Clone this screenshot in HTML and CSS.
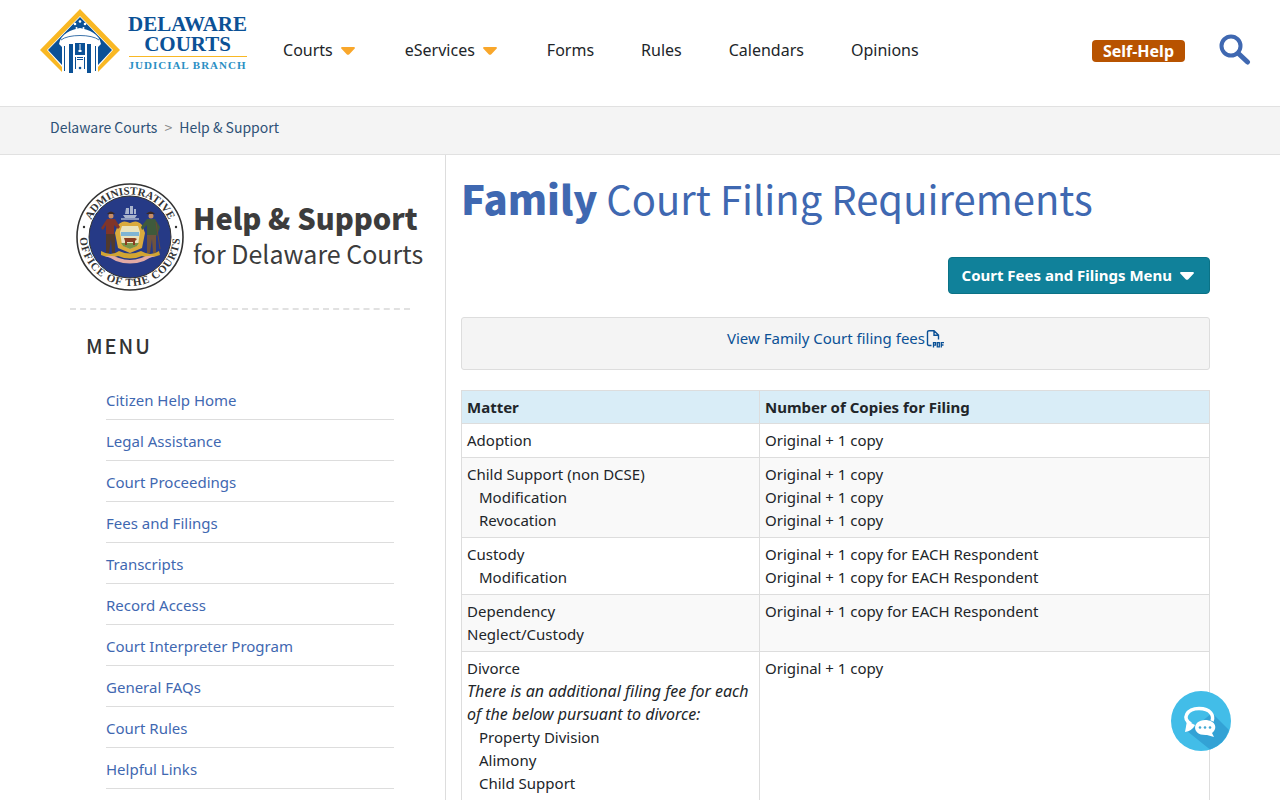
FILE: index.html
```html
<!DOCTYPE html>
<html lang="en">
<head>
    <meta charset="UTF-8">
    <meta name="viewport" content="width=device-width, initial-scale=1.0">
    <title>Family Court Filing Requirements - Delaware Courts</title>
    <link rel="stylesheet" href="styles.css">
</head>
<body>
    <header class="site-header">
        <a href="#" class="logo">
            <svg class="logo-mark" viewBox="0 0 82 66" width="82" height="66" aria-hidden="true">
                <path d="M41 0 81 41 59 63V58L74 41 41 7 8 41 23 58V63L1 41z" fill="#f9b824"/>
                <path d="M41 8 73 41 59 56V32H23V56L9 41z" fill="#0b5196"/>
                <path d="M20 35C22 24 32 21 41 19C50 21 60 24 62 35L59 38H23z" fill="#fff"/>
                <path d="M22 31C29 25 53 25 60 31" fill="none" stroke="#0b5196" stroke-width=".8"/>
                <path d="M23 37H59V62L41 65 23 62z" fill="#fff"/>
                <path d="M25 37h1v25h-1zM30 35h4v29h-4zM48 35h4v29h-4zM56 37h1v25h-1zM36 34h10v12H36zM36 48h1v12h-1zM45 48h1v12h-1zM38 48h6v1h-6zM38 50h6v1h-6z" fill="#0b5196"/>
                <path d="M40.500 35h1v6h-1zM39.500 41h3v2h-3z" fill="#fff"/>
                <circle cx="41" cy="59" r="1.300" fill="#0b5196"/>
                <g fill="#fff">
                    <circle cx="41" cy="12.500" r="1.300"/><circle cx="36" cy="15" r="1.300"/><circle cx="46" cy="15" r="1.300"/>
                    <circle cx="37.500" cy="19" r="1"/><circle cx="44.500" cy="19" r="1"/>
                </g>
            </svg>
            <span class="logo-text">
                <span class="logo-name">DELAWARE</span>
                <span class="logo-name">COURTS</span>
                <span class="logo-branch">JUDICIAL BRANCH</span>
            </span>
        </a>
        <nav class="main-nav">
            <a href="#">Courts <svg class="caret" viewBox="0 0 14 8" width="14" height="8"><path d="M1 0h12q1.500 .5 .5 1.800L8.300 7.200Q7 8.400 5.700 7.200L.5 1.800Q-.5 .5 1 0z" fill="currentColor"/></svg></a>
            <a href="#">eServices <svg class="caret" viewBox="0 0 14 8" width="14" height="8"><path d="M1 0h12q1.500 .5 .5 1.800L8.300 7.200Q7 8.400 5.700 7.200L.5 1.800Q-.5 .5 1 0z" fill="currentColor"/></svg></a>
            <a href="#">Forms</a>
            <a href="#">Rules</a>
            <a href="#">Calendars</a>
            <a href="#">Opinions</a>
        </nav>
        <a href="#" class="self-help">Self-Help</a>
        <button type="button" class="search-btn" aria-label="Search">
            <svg viewBox="0 0 32 32" width="32" height="32">
                <circle cx="12" cy="12" r="9.500" fill="none" stroke="#3f68b1" stroke-width="4"/>
                <path d="M20 20 28.500 28" stroke="#3f68b1" stroke-width="5" stroke-linecap="round"/>
            </svg>
        </button>
    </header>

    <div class="breadcrumb">
        <a href="#">Delaware Courts</a>
        <span>&gt;</span>
        <a href="#">Help &amp; Support</a>
    </div>

    <div class="page">
        <aside class="sidebar">
            <a href="#" class="section-brand">
                <svg viewBox="0 0 108 108" width="108" height="108" aria-hidden="true">
                    <defs>
                        <path id="sealTop" d="M11.500 54a42.500 42.500 0 0 1 85 0"/>
                        <path id="sealBottom" d="M4 53a50 50 0 0 0 100 0"/>
                    </defs>
                    <circle cx="54" cy="54" r="53" fill="#fff" stroke="#333" stroke-width="1.600"/>
                    <circle cx="54" cy="54" r="41" fill="#263a86" stroke="#333"/>
                    <g class="seal-text">
                        <text text-anchor="middle"><textPath href="#sealTop" startOffset="50%">ADMINISTRATIVE</textPath></text>
                        <text class="seal-bottom" text-anchor="middle"><textPath href="#sealBottom" startOffset="50%">OFFICE OF THE COURTS</textPath></text>
                    </g>
                    <circle cx="8" cy="44" r="1.200" fill="#333"/>
                    <circle cx="100" cy="44" r="1.200" fill="#333"/>
                    <!-- ship crest -->
                    <path d="M47 32h14l-2 3H49zM50 25h3v6h-4zM54 23h3v8h-3zM58 26h2v5h-2z" fill="#a9b4cd"/>
                    <path d="M45 36h18" stroke="#a9b4cd" stroke-width="1.500"/>
                    <!-- shield -->
                    <path d="M42 42q5-6 12-2 7-4 12 2l3 8-3 15-12 5-12-5-3-15z" fill="#d9aa3d"/>
                    <path d="M46 43h16l2 6-2 13-8 4-8-4-2-13z" fill="#e9e3be"/>
                    <path d="M45 49h18v4H45z" fill="#7fb5d5"/>
                    <path d="M45 60h18l-2 3-7 3-7-3z" fill="#789348"/>
                    <path d="M48 55h11l2 1-2 2v4h-2v-3h-6v3h-2v-4z" fill="#8a3d21"/>
                    <!-- supporters -->
                    <circle cx="35" cy="33" r="2.500" fill="#c78d66"/>
                    <path d="M31 31q4-5 8 0z" fill="#3d2a24"/>
                    <path d="M31 36h8l5 8-2 2-4-4v10h-8V42l-3 5-2-2z" fill="#80352a"/>
                    <path d="M30 51h9v19h-3l-1-14-2 14h-3z" fill="#513a2d"/>
                    <circle cx="75" cy="33" r="2.500" fill="#c78d66"/>
                    <path d="M70 31q5-5 9 0z" fill="#3d2a24"/>
                    <path d="M71 36h8l5 8-3 9-2-1 1-7-1 8h-8V42l-5 5-1-3z" fill="#3f5a3c"/>
                    <path d="M71 52h9v18h-3l-1-14-2 14h-3z" fill="#70533e"/>
                    <path d="M80 39 84 66" stroke="#6d4a34"/>
                    <!-- scroll -->
                    <path d="M25 68q10 6 18 0 11 5 22 0 10 6 18 0l1 4q-10 4-18 1-12 5-24 0-8 3-17-1z" fill="#d2a532"/>
                    <path d="M29 73q8-1 14 2 11 4 22 0 6-3 14-2-7 2-11 5-14 5-28 0-4-3-11-5z" fill="#e2aaa4"/>
                </svg>
                <span class="section-title"><strong>Help &amp; Support</strong>for Delaware Courts</span>
            </a>
            <h2>MENU</h2>
            <ul class="side-menu">
                <li><a href="#">Citizen Help Home</a></li>
                <li><a href="#">Legal Assistance</a></li>
                <li><a href="#">Court Proceedings</a></li>
                <li><a href="#">Fees and Filings</a></li>
                <li><a href="#">Transcripts</a></li>
                <li><a href="#">Record Access</a></li>
                <li><a href="#">Court Interpreter Program</a></li>
                <li><a href="#">General FAQs</a></li>
                <li><a href="#">Court Rules</a></li>
                <li><a href="#">Helpful Links</a></li>
            </ul>
        </aside>

        <main class="content">
            <h1><strong>Family</strong> Court Filing Requirements</h1>
            <div class="actions">
                <button type="button" class="menu-btn">Court Fees and Filings Menu
                    <svg viewBox="0 0 14 8" width="14" height="8"><path d="M1 0h12q1.500 .5 .5 1.800L8.300 7.200Q7 8.400 5.700 7.200L.5 1.800Q-.5 .5 1 0z" fill="currentColor"/></svg>
                </button>
            </div>
            <div class="well">
                <a href="#">View Family Court filing fees<svg class="pdf-icon" viewBox="0 0 18 18" width="18" height="18" role="img" aria-label="PDF">
                    <path d="M5.500 15.500H3Q1.500 15.500 1.500 14V2Q1.500 .7 3 .7H8L12.500 5V9.500M8 1V5.200H12.500" fill="none" stroke="currentColor" stroke-width="1.400"/>
                    <path d="M7.500 17.500V12.700H9.500V15.200H7.500M11.300 12.700V16.800H13.300V12.700zM15.300 17.500V12.700H18M15.300 15H17.500" fill="none" stroke="currentColor" stroke-width="1.300"/>
                </svg></a>
            </div>
            <table class="filing-table">
                <thead>
                    <tr>
                        <th scope="col">Matter</th>
                        <th scope="col">Number of Copies for Filing</th>
                    </tr>
                </thead>
                <tbody>
                    <tr>
                        <td>Adoption</td>
                        <td>Original + 1 copy</td>
                    </tr>
                    <tr>
                        <td>Child Support (non DCSE)
                            <div class="sub">Modification</div>
                            <div class="sub">Revocation</div>
                        </td>
                        <td>Original + 1 copy<br>Original + 1 copy<br>Original + 1 copy</td>
                    </tr>
                    <tr>
                        <td>Custody
                            <div class="sub">Modification</div>
                        </td>
                        <td>Original + 1 copy for EACH Respondent<br>Original + 1 copy for EACH Respondent</td>
                    </tr>
                    <tr>
                        <td>Dependency<br>Neglect/Custody</td>
                        <td>Original + 1 copy for EACH Respondent</td>
                    </tr>
                    <tr>
                        <td>Divorce<br>
                            <em>There is an additional filing fee for each<br>of the below pursuant to divorce:</em>
                            <div class="sub">Property Division</div>
                            <div class="sub">Alimony</div>
                            <div class="sub">Child Support</div>
                            <div class="sub">Custody</div>
                        </td>
                        <td>Original + 1 copy</td>
                    </tr>
                </tbody>
            </table>
        </main>
    </div>

    <button type="button" class="chat-btn" aria-label="Chat">
        <svg viewBox="0 0 60 60" width="60" height="60">
            <circle cx="30" cy="30" r="30" fill="#42bde8"/>
            <path d="M41 22 58 39A30 30 0 0 1 39 58.500L16 40 24 36z" fill="#33a2d5"/>
            <path d="M20 33C10 28 16 17.500 28 17.500S43 25 41 30" fill="none" stroke="#fff" stroke-width="3.500"/>
            <path d="M16 30 14 41Q21 40 24 34z" fill="#fff"/>
            <path d="M34 29C45 29 47 38 41 42L43 46 36 44C20 45 21 29 34 29z" fill="#fff"/>
            <g fill="#42a9d4"><circle cx="29" cy="36.500" r="1.300"/><circle cx="34" cy="36.500" r="1.300"/><circle cx="39" cy="36.500" r="1.300"/></g>
        </svg>
    </button>
</body>
</html>
```
FILE: styles.css
```css
* {
    box-sizing: border-box;
}
body {
    margin: 0;
    height: 100vh;
    overflow: hidden;
    display: flex;
    flex-direction: column;
    font-family: "Noto Sans", sans-serif;
    font-size: 15px;
    line-height: 23px;
    color: #212529;
    background: #fff;
}
a {
    color: #3f68b1;
    text-decoration: none;
}
button {
    border: none;
    padding: 0;
    background: none;
    font: inherit;
    cursor: pointer;
}
svg {
    display: block;
}

/* Header */
.site-header {
    flex: none;
    display: flex;
    align-items: flex-start;
    height: 106px;
    padding: 0 29px 0 39px;
}
.logo {
    display: flex;
    gap: 7px;
    padding-top: 9px;
}
.logo-text {
    display: flex;
    flex-direction: column;
    align-items: center;
    padding-top: 5px;
    font-family: "Liberation Serif", serif;
    font-weight: bold;
    color: #0b5196;
}
.logo-name {
    font-size: 21px;
    line-height: 20px;
}
.logo-branch {
    margin-top: 2px;
    border-top: 1px solid #f9b824;
    font-size: 11px;
    line-height: 16px;
    letter-spacing: 1px;
    color: #2a8fc4;
}
.main-nav {
    display: flex;
    gap: 47px;
    padding: 39px 0 0 36px;
    font-size: 16px;
}
.main-nav a {
    display: flex;
    align-items: center;
    gap: 8px;
    color: #212529;
}
.main-nav .caret {
    margin-right: 3px;
    color: #f9a72b;
}
.self-help {
    margin: 40px 34px 0 auto;
    padding: 0 11px;
    border-radius: 4px;
    background: #b85300;
    color: #fff;
    font-size: 16px;
    line-height: 22px;
    font-weight: bold;
}
.search-btn {
    margin-top: 34px;
}

/* Breadcrumb */
.breadcrumb {
    flex: none;
    display: flex;
    gap: 7px;
    height: 49px;
    padding: 9px 50px;
    border: 1px solid #e1e1e1;
    border-width: 1px 0;
    background: #f4f4f4;
    font-family: "Noto Sans CJK SC", sans-serif;
    font-size: 14px;
    color: #888;
}
.breadcrumb a {
    color: #2e5277;
}

.page {
    flex: 1;
    min-height: 0;
    display: grid;
    grid-template-columns: 445px 1fr;
}

/* Sidebar */
.sidebar {
    padding: 28px 15px 0 70px;
}
.section-brand {
    display: flex;
    align-items: center;
    gap: 9px;
    margin-right: 20px;
    padding: 0 0 17px 6px;
    border-bottom: 2px dashed #e1e1e1;
    color: #3c3c3c;
}
.section-brand svg {
    flex: none;
}
.seal-text {
    font-family: "Liberation Serif", serif;
    font-size: 11px;
    font-weight: bold;
    fill: #333;
}
.seal-bottom {
    letter-spacing: 1px;
}
.section-title {
    padding-bottom: 4px;
    font-family: "Noto Sans CJK SC", sans-serif;
    font-size: 25px;
    line-height: 36px;
    white-space: nowrap;
}
.section-title strong {
    display: block;
    font-size: 29px;
    font-weight: 900;
}
.sidebar h2 {
    margin: 22px 0 19px 16px;
    font-family: "Noto Sans CJK SC", sans-serif;
    font-size: 20px;
    font-weight: 500;
    line-height: 28px;
    letter-spacing: 2px;
    color: #333;
}
.side-menu {
    margin: 0 36px;
    padding: 0;
    list-style: none;
}
.side-menu li {
    padding: 10px 0 7px;
    border-bottom: 1px solid #ddd;
}

/* Content */
.content {
    padding: 14px 70px 0 15px;
    border-left: 1px solid #ddd;
}
.content h1 {
    margin: 0;
    font-family: "Noto Sans CJK SC", sans-serif;
    font-size: 40px;
    font-weight: 400;
    line-height: 58px;
    color: #3f68b1;
}
.content h1 strong {
    font-weight: 900;
}
.actions {
    display: flex;
    justify-content: flex-end;
    margin: 30px 0 23px;
}
.menu-btn {
    display: flex;
    align-items: center;
    gap: 8px;
    padding: 6px 15px 6px 13px;
    border: 1px solid #0b7286;
    border-radius: 4px;
    background: #10819a;
    color: #fff;
    font-weight: bold;
}
.well {
    height: 53px;
    margin-bottom: 20px;
    padding-top: 9px;
    border: 1px solid #ddd;
    border-radius: 3px;
    background: #f4f4f4;
    text-align: center;
}
.well a {
    color: #0b5196;
}
.pdf-icon {
    display: inline-block;
    margin-left: 1px;
    vertical-align: -4px;
}
.filing-table {
    width: 100%;
    border-collapse: collapse;
}
.filing-table th,
.filing-table td {
    padding: 5px;
    border: 1px solid #ddd;
    text-align: left;
    vertical-align: top;
}
.filing-table th {
    padding-bottom: 4px;
    background: #d9edf7;
}
.filing-table th:first-child {
    width: 298px;
}
.filing-table tbody tr:nth-child(even) {
    background: #f9f9f9;
}
.filing-table em {
    font-size: 16px;
}
.sub {
    padding-left: 12px;
}

/* Chat */
.chat-btn {
    position: fixed;
    right: 49px;
    bottom: 49px;
}
```
